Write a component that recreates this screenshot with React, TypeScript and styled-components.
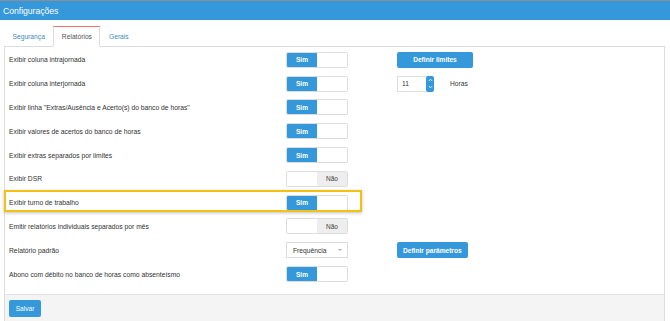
import React from "react";
import styled, { createGlobalStyle, css } from "styled-components";

const GlobalStyle = createGlobalStyle`
  html, body {
    margin: 0;
    padding: 0;
    background: #fff;
    font-family: "Liberation Sans", Arial, sans-serif;
  }
`;

const blue = "#3498db";

const Page = styled.div`
  width: 670px;
  height: 321px;
  overflow: hidden;
  background: #fff;
`;

const Header = styled.header`
  height: 19px;
  border-top: 1px solid #8a8f94;
  background: ${blue};
  display: flex;
  align-items: center;
  padding-left: 3px;
`;

const Title = styled.h1`
  margin: 0;
  font-size: 8.6px;
  font-weight: normal;
  color: #fff;
`;

const Content = styled.div`
  margin: 6px 5px 0 4px;
`;

const TabList = styled.nav`
  display: flex;
  height: 20px;
  border-bottom: 1px solid #ddd;
`;

const Tab = styled.div<{ $active?: boolean }>`
  display: flex;
  align-items: center;
  padding: 0 7.5px;
  font-size: 6.7px;
  color: #3c8dbc;
  margin-bottom: -1px;
  border: 1px solid transparent;
  ${(p) =>
    p.$active &&
    css`
      color: #555;
      background: #fff;
      border-color: #ddd;
      border-top-color: #f07070;
      border-bottom-color: #fff;
    `}
`;

const Panel = styled.section`
  border: 1px solid #ddd;
  border-top: none;
`;

const Form = styled.div`
  display: grid;
  grid-template-columns: 277px 111px 1fr;
  grid-auto-rows: 23.8px;
  align-items: center;
  padding: 1px 4px 8px;
`;

const Row = styled.div`
  display: contents;
`;

const Label = styled.div<{ $highlight?: boolean }>`
  font-size: 6.75px;
  color: #333;
  height: 100%;
  display: flex;
  align-items: center;
  position: relative;
  ${(p) =>
    p.$highlight &&
    css`
      &::after {
        content: "";
        position: absolute;
        left: -5px;
        top: -1px;
        width: 354px;
        height: 18px;
        border: 2.5px solid #f3c014;
        box-shadow: 0 1px 3px rgba(0, 0, 0, 0.25);
        pointer-events: none;
      }
    `}
`;

const Toggle = styled.div`
  display: flex;
  width: 62px;
  height: 16px;
  box-sizing: border-box;
  border: 1px solid #ddd;
  border-radius: 2px;
  overflow: hidden;
`;

const ToggleHalf = styled.div<{ $on?: boolean; $off?: boolean }>`
  flex: 1;
  display: flex;
  align-items: center;
  justify-content: center;
  font-size: 6.5px;
  background: #fff;
  ${(p) =>
    p.$on &&
    css`
      background: ${blue};
      color: #fff;
      font-weight: bold;
    `}
  ${(p) =>
    p.$off &&
    css`
      background: #eee;
      color: #444;
    `}
`;

const Button = styled.button`
  height: 16px;
  padding: 0 6px;
  border: none;
  border-radius: 2px;
  background: ${blue};
  color: #fff;
  font-family: inherit;
  font-size: 6.6px;
  font-weight: bold;
  justify-self: start;
`;

const WideButton = styled(Button)`
  width: 76px;
`;

const Cell = styled.div`
  display: flex;
  align-items: center;
`;

const NumberInput = styled.div`
  display: flex;
  height: 16px;
`;

const NumberValue = styled.div`
  width: 29px;
  box-sizing: border-box;
  border: 1px solid #ddd;
  border-right: none;
  font-size: 6.7px;
  color: #333;
  display: flex;
  align-items: center;
  padding-left: 4px;
`;

const Spinner = styled.div`
  width: 8px;
  background: ${blue};
  border-radius: 2px;
  display: flex;
  flex-direction: column;
  align-items: center;
  justify-content: space-around;
  padding: 1px 0;
  box-sizing: border-box;
`;

const Unit = styled.span`
  margin-left: 16px;
  font-size: 6.7px;
  color: #333;
`;

const Select = styled.div`
  width: 62px;
  height: 16px;
  box-sizing: border-box;
  border: 1px solid #ddd;
  display: flex;
  align-items: center;
  justify-content: space-between;
  padding: 0 5px 0 6px;
  font-size: 6.7px;
  color: #333;
`;

const Caret = styled.span`
  width: 0;
  height: 0;
  border-left: 2px solid transparent;
  border-right: 2px solid transparent;
  border-top: 2px solid #aaa;
`;

const Footer = styled.footer`
  height: 27px;
  border-top: 1px solid #e3e3e3;
  background: #f4f4f4;
  display: flex;
  align-items: center;
  padding-left: 4px;
`;

const SaveButton = styled(Button)`
  height: 17px;
  width: 32px;
  padding: 0;
  font-weight: normal;
`;

const Chevron = ({ up }: { up?: boolean }) => (
  <svg width="5" height="4" viewBox="0 0 5 4">
    <path
      d={up ? "M0.8 3 L2.5 1.2 L4.2 3" : "M0.8 1 L2.5 2.8 L4.2 1"}
      fill="none"
      stroke="#fff"
      strokeWidth="0.8"
    />
  </svg>
);

const Switch = ({ on }: { on: boolean }) => (
  <Toggle>
    {on ? (
      <>
        <ToggleHalf $on>Sim</ToggleHalf>
        <ToggleHalf />
      </>
    ) : (
      <>
        <ToggleHalf />
        <ToggleHalf $off>Não</ToggleHalf>
      </>
    )}
  </Toggle>
);

type Setting = {
  label: string;
  on?: boolean;
  select?: boolean;
  extra?: React.ReactNode;
  highlight?: boolean;
};

const settings: Setting[] = [
  {
    label: "Exibir coluna intrajornada",
    on: true,
    extra: <WideButton>Definir limites</WideButton>,
  },
  {
    label: "Exibir coluna interjornada",
    on: true,
    extra: (
      <Cell>
        <NumberInput>
          <NumberValue>11</NumberValue>
          <Spinner>
            <Chevron up />
            <Chevron />
          </Spinner>
        </NumberInput>
        <Unit>Horas</Unit>
      </Cell>
    ),
  },
  { label: 'Exibir linha "Extras/Ausência e Acerto(s) do banco de horas"', on: true },
  { label: "Exibir valores de acertos do banco de horas", on: true },
  { label: "Exibir extras separados por limites", on: true },
  { label: "Exibir DSR", on: false },
  { label: "Exibir turno de trabalho", on: true, highlight: true },
  { label: "Emitir relatórios individuais separados por mês", on: false },
  {
    label: "Relatório padrão",
    select: true,
    extra: <Button>Definir parâmetros</Button>,
  },
  { label: "Abono com débito no banco de horas como absenteísmo", on: true },
];

export default function App() {
  return (
    <Page>
      <GlobalStyle />
      <Header>
        <Title>Configurações</Title>
      </Header>
      <Content>
        <TabList>
          <Tab>Segurança</Tab>
          <Tab $active>Relatórios</Tab>
          <Tab>Gerais</Tab>
        </TabList>
        <Panel>
          <Form>
            {settings.map((s) => (
              <Row key={s.label}>
                <Label $highlight={s.highlight}>{s.label}</Label>
                <Cell>
                  {s.select ? (
                    <Select>
                      Frequência
                      <Caret />
                    </Select>
                  ) : (
                    <Switch on={!!s.on} />
                  )}
                </Cell>
                <Cell>{s.extra}</Cell>
              </Row>
            ))}
          </Form>
          <Footer>
            <SaveButton>Salvar</SaveButton>
          </Footer>
        </Panel>
      </Content>
    </Page>
  );
}
